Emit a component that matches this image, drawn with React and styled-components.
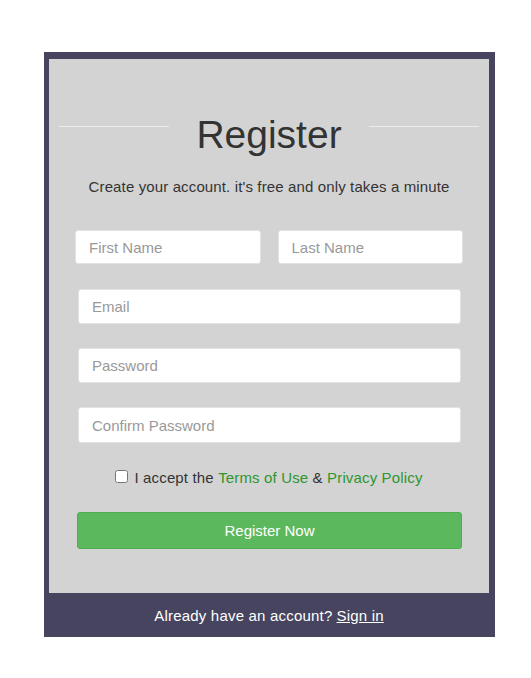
import React from 'react'
import styled, { createGlobalStyle } from 'styled-components'

const GlobalStyle = createGlobalStyle`
    body {
        margin: 0;
        background: #fff;
        font-family: "Liberation Sans", Arial, sans-serif;
    }
`

const Page = styled.div`
    padding: 52px 0 0 44px;
`

const Card = styled.div`
    width: 451px;
    background: #46445f;
    box-sizing: border-box;
    padding: 7px 6px 0 5px;
`

const Form = styled.form`
    background: #d3d3d3;
    height: 534px;
    box-sizing: border-box;
    padding: 54px 10px 0 10px;
`

const TitleRow = styled.div`
    display: flex;
    height: 44px;
`

const Line = styled.span`
    flex: 1;
    height: 1px;
    margin-top: 13px;
    background: #ececec;
`

const Title = styled.h2`
    margin: 0 27px;
    font-size: 39px;
    font-weight: normal;
    line-height: 44px;
    color: #333;
`

const Subtitle = styled.p`
    margin: 21px 0 0;
    text-align: center;
    font-size: 15px;
    line-height: 17px;
    letter-spacing: 0.13px;
    color: #333;
`

const NameRow = styled.div`
    display: flex;
    gap: 17px;
    margin: 35px 16px 0;
`

const Input = styled.input`
    display: block;
    box-sizing: border-box;
    width: ${p => (p.$half ? 'auto' : '100%')};
    flex: ${p => (p.$half ? 1 : 'none')};
    min-width: 0;
    height: ${p => p.$h || 35}px;
    padding: 0 13px;
    border: 1px solid #e2e2e2;
    border-radius: 3px;
    background: #fff;
    font-family: inherit;
    font-size: 15px;
    color: #333;
    outline: none;

    &::placeholder {
        color: #999;
    }
`

const Field = styled.div`
    margin: ${p => p.$top}px 18px 0 19px;
`

const AcceptRow = styled.label`
    display: flex;
    justify-content: center;
    align-items: center;
    margin-top: 26px;
    font-size: 15px;
    line-height: 17px;
    letter-spacing: 0.15px;
    color: #333;
`

const Check = styled.input`
    width: 13px;
    height: 13px;
    margin: 0 6px 2px 0;
`

const Link = styled.a`
    color: #2f962f;
    text-decoration: none;
`

const Button = styled.button`
    display: block;
    box-sizing: border-box;
    width: 385px;
    height: 37px;
    margin: 26px 0 0 18px;
    background: #5cb85c;
    border: 1px solid #4cae4c;
    border-radius: 3px;
    color: #fff;
    font-family: inherit;
    font-size: 15px;
`

const Footer = styled.div`
    height: 44px;
    display: flex;
    align-items: center;
    justify-content: center;
    color: #fff;
    font-size: 15px;
    letter-spacing: 0.2px;
`

const SignIn = styled.a`
    color: #fff;
    text-decoration: underline;
    margin-left: 4px;
`

export default function App() {
    return (
        <Page>
            <GlobalStyle />
            <Card>
                <Form onSubmit={e => e.preventDefault()}>
                    <TitleRow>
                        <Line />
                        <Title>Register</Title>
                        <Line />
                    </TitleRow>
                    <Subtitle>Create your account. it's free and only takes a minute</Subtitle>

                    <NameRow>
                        <Input $half $h={34} placeholder="First Name" />
                        <Input $half $h={34} placeholder="Last Name" />
                    </NameRow>

                    <Field $top={25}>
                        <Input type="email" placeholder="Email" />
                    </Field>
                    <Field $top={24}>
                        <Input type="password" placeholder="Password" />
                    </Field>
                    <Field $top={24}>
                        <Input type="password" $h={36} placeholder="Confirm Password" />
                    </Field>

                    <AcceptRow>
                        <Check type="checkbox" />
                        I accept the&nbsp;<Link href="#">Terms of Use</Link>&nbsp;&amp;&nbsp;<Link href="#">Privacy Policy</Link>
                    </AcceptRow>

                    <Button type="submit">Register Now</Button>
                </Form>
                <Footer>
                    Already have an account?<SignIn href="#">Sign in</SignIn>
                </Footer>
            </Card>
        </Page>
    )
}
